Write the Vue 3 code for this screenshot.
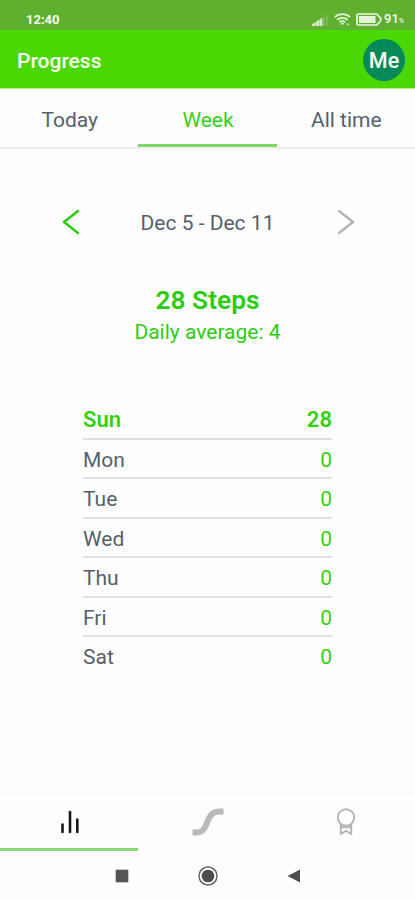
<script setup>
const tabs = [
  { name: 'Today', active: false },
  { name: 'Week', active: true },
  { name: 'All time', active: false },
]
const days = [
  { day: 'Sun', steps: 28 },
  { day: 'Mon', steps: 0 },
  { day: 'Tue', steps: 0 },
  { day: 'Wed', steps: 0 },
  { day: 'Thu', steps: 0 },
  { day: 'Fri', steps: 0 },
  { day: 'Sat', steps: 0 },
]
</script>

<template>
  <div class="screen">
    <div class="status">
      <span class="clock">12:40</span>
      <svg class="signal" width="16" height="12" viewBox="0 0 16 12">
        <path d="M0 12V10.400L3.400 8v4zM3.800 12V8l3.200-2.300V12zM7.400 12V5.500l3-2V12z" fill="#d5ebca" />
        <path d="M11 12V3.600l1.600-1.200V12zM14.200 12V1.400l1.400-1V12z" fill="#88c069" />
      </svg>
      <svg class="wifi" width="17" height="13" viewBox="0 0 17 13">
        <g fill="none" stroke="#e4f4dc" stroke-width="1.700">
          <path d="M.8 4.200c4.200-4 11-4 15.200 0" />
          <path d="M3.100 6.800c3-2.700 7.600-2.700 10.600 0" />
          <path d="M5.500 9.200c1.800-1.400 4-1.400 5.800 0" />
        </g>
        <path d="M6.500 10.100h3.800l-1.900 2.200z" fill="#e4f4dc" />
        <path d="M12.800 10l2.800 1.300-2.800 1.400z" fill="#c2e4b2" />
      </svg>
      <svg class="battery" width="26" height="13" viewBox="0 0 26 13">
        <path d="M2.500 1h18.200l3.900 4v3l-3.900 4H2.500Q1 12 1 10.500v-8Q1 1 2.500 1z" fill="none" stroke="#edf8e7" stroke-width="1.700" />
        <rect x="3" y="3" width="16.500" height="7" fill="#e4f4dc" />
      </svg>
      <span class="level">91<small>%</small></span>
    </div>

    <header class="header">
      <h1>Progress</h1>
      <div class="avatar">Me</div>
    </header>

    <nav class="tabs">
      <div v-for="tab in tabs" :key="tab.name" class="tab" :class="{ active: tab.active }">{{ tab.name }}</div>
    </nav>

    <main class="content">
      <div class="range">
        <svg width="18" height="26" viewBox="0 0 18 26"><path d="M16 2L2 13l14 11" fill="none" stroke="#26cb0c" stroke-width="2.400" stroke-linecap="round" stroke-linejoin="round" /></svg>
        <span>Dec 5 - Dec 11</span>
        <svg width="18" height="26" viewBox="0 0 18 26"><path d="M2 2l14 11L2 24" fill="none" stroke="#b3b3b3" stroke-width="2.400" stroke-linecap="round" stroke-linejoin="round" /></svg>
      </div>

      <section class="summary">
        <h2>28 Steps</h2>
        <p>Daily average: 4</p>
      </section>

      <ul class="days">
        <li v-for="d in days" :key="d.day" :class="{ best: d.steps > 0 }">
          <span>{{ d.day }}</span>
          <span class="steps">{{ d.steps }}</span>
        </li>
      </ul>
    </main>

    <nav class="bottom">
      <div class="item active">
        <svg width="20" height="24" viewBox="0 0 20 24"><path d="M2.500 14.500v7.500M10 2v20M17.300 9.500V22" stroke="#171717" stroke-width="2.600" stroke-linecap="round" /></svg>
      </div>
      <div class="item">
        <svg width="34" height="30" viewBox="0 0 34 30"><path d="M1.500 25.500h4.500c5 0 7.300-2.700 9.300-8l1.800-4.500c2.200-5.500 5.500-8.500 10.500-8.500h5" fill="none" stroke="#b9b9b9" stroke-width="6" /></svg>
      </div>
      <div class="item">
        <svg width="20" height="28" viewBox="0 0 20 28">
          <g fill="none" stroke="#b3b3b3" stroke-width="1.900" stroke-linejoin="round">
            <circle cx="10" cy="9.500" r="8.200" />
            <path d="M4.800 16v10l5.200-3.200 5.200 3.200V16M5 19.300h10" />
          </g>
        </svg>
      </div>
    </nav>

    <div class="system">
      <div class="key"><svg width="14" height="14" viewBox="0 0 14 14"><rect x=".7" y=".7" width="12.600" height="12.600" fill="#555" /></svg></div>
      <div class="key"><svg width="20" height="20" viewBox="0 0 20 20"><circle cx="10" cy="10" r="9" fill="none" stroke="#666" stroke-width="1.500" /><circle cx="10" cy="10" r="6.300" fill="#4d4d4d" /></svg></div>
      <div class="key"><svg width="14" height="14" viewBox="0 0 14 14"><path d="M.6 7L13 .4v13.200z" fill="#4d4d4d" /></svg></div>
    </div>
  </div>
</template>

<style>
body { background: #fefefe; }
</style>

<style scoped>
.screen {
  display: flex;
  flex-direction: column;
  height: 900px;
  background: #fefefe;
  color: #565f6b;
  font-family: Roboto, "Liberation Sans", sans-serif;
  font-size: 21px;
  line-height: 24px;
  overflow: hidden;
}
svg { display: block; flex: none; }
.status {
  box-sizing: border-box;
  display: flex;
  align-items: center;
  height: 30px;
  padding: 9px 10px 0 26px;
  background: #60af2f;
  color: #f5fcf1;
}
.clock { font-size: 13px; font-weight: 700; }
.signal { margin-left: auto; margin-right: 6px; }
.wifi { margin-right: 5px; }
.battery { margin-right: 2px; }
.level { font-size: 13px; font-weight: 500; margin-right: 1px; }
.level small { font-size: 7px; }
.header {
  box-sizing: border-box;
  display: flex;
  align-items: center;
  justify-content: space-between;
  height: 58px;
  padding: 1px 10px 0 17px;
  background: #4bd704;
  color: #f8fff3;
}
h1 { margin: 2px 0 0; font-size: 21px; font-weight: 500; }
.avatar {
  width: 42px;
  height: 42px;
  border-radius: 50%;
  background: #088a58;
  font-size: 21.500px;
  font-weight: 500;
  line-height: 44px;
  text-align: center;
}
.tabs {
  box-sizing: border-box;
  display: grid;
  grid-template-columns: repeat(3, 1fr);
  height: 61px;
  border-top: 1px solid #b4f092;
  border-bottom: 2px solid #efeff0;
}
.tab {
  box-sizing: border-box;
  height: 58px;
  padding: 19px 0 0 1px;
  text-align: center;
}
.tab.active { color: #35cf16; border-bottom: 3px solid #7fd968; }
.content { flex: 1; }
.range {
  display: flex;
  align-items: center;
  justify-content: space-between;
  padding: 59px 60px 0 62px;
}
.range span { padding: 3px 2px 0 0; }
.summary { padding-top: 50px; text-align: center; color: #2bcc12; }
h2 { margin: 0; font-size: 26.300px; font-weight: 600; line-height: 30px; }
p { margin: 5px 0 0; }
.days {
  width: 249px;
  margin: 56px auto 0;
  padding: 0;
  list-style: none;
}
li {
  box-sizing: border-box;
  display: flex;
  justify-content: space-between;
  align-items: center;
  height: 39.500px;
  padding: 3px 0 0;
  border-bottom: 2px solid #e0e0e0;
}
li:last-child { border-color: transparent; }
.steps, .best { color: #35d014; }
.best { font-size: 22px; font-weight: 600; }
.bottom {
  box-sizing: border-box;
  display: grid;
  grid-template-columns: repeat(3, 1fr);
  height: 59px;
  border-top: 1px solid #fafafa;
}
.item {
  display: flex;
  align-items: center;
  justify-content: center;
  padding: 2px 0 0 1px;
  border-bottom: 3px solid transparent;
}
.item.active { border-color: #8bda75; }
.system {
  display: flex;
  align-items: center;
  justify-content: center;
  height: 49px;
}
.key { display: flex; justify-content: center; width: 86px; }
</style>
